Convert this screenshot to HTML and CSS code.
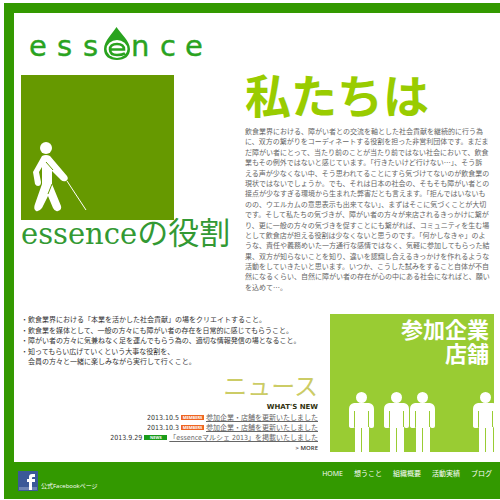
FILE: index.html
```html
<!DOCTYPE html>
<html lang="ja">
<head>
<meta charset="utf-8">
<title>essence</title>
<link rel="stylesheet" href="styles.css">
</head>
<body>
<div class="page">
  <main class="content">
    <header class="brand">
      <svg class="logo" width="180" height="38" viewBox="28 25 180 38" role="img" aria-label="essence">
        <g class="logo-text">
          <text x="29 57 83" y="56">ess</text>
          <text x="131 160 185" y="56">nce</text>
        </g>
        <path d="M116.500 27C113 33 104 41 104 49C104 56 109 60 117 60C125 60 130 56 130 49C130 41 120 33 116.500 27Z" fill="#2aa31f"/>
        <ellipse cx="117" cy="49" rx="10.500" ry="9" fill="#fff"/>
        <path d="M125 53.500Q122 55 117 55Q110 55 110 49.500Q110 44 117 44Q124 44 124 49.500H111" fill="none" stroke="#2aa31f" stroke-width="2.600"/>
      </svg>
    </header>

    <section class="top">
      <div class="role">
        <svg class="walker" width="153" height="145" viewBox="21 75 153 145" aria-hidden="true">
          <path d="M21 75h153v145H21z" fill="#690"/>
          <circle cx="46" cy="148" r="6" fill="#fff"/>
          <path d="M42 156Q46 154 50 156L67 176Q69 179 66 181Q63 182 61 180L52 171V184L61 206Q62 210 58 211Q55 212 53 208L48 196L42 208Q39 212 36 211Q33 209 35 204L42 184V167L39 172L41 182Q41 186 38 186Q36 186 35 184L33 172Z" fill="#fff"/>
          <path d="M42 184L51 180L52 184L48 196Z" fill="#fff"/>
          <path d="M46 162L53 170M52 184L48 194" fill="none" stroke="#690"/>
          <path d="M67 181L86 210" fill="none" stroke="#fff"/>
        </svg>
        <h2 class="role-title"><span class="latin">essence</span>の役割</h2>
      </div>
      <div class="about">
        <h1>私たちは</h1>
        <p class="lines">
          <span>飲食業界における、障がい者との交流を軸とした社会貢献を継続的に行う為</span>
          <span>に、双方の繋がりをコーディネートする役割を担った非営利団体です。まだま</span>
          <span>だ障がい者にとって、当たり前のことが当たり前ではない社会において、飲食</span>
          <span>業もその例外ではないと感じています。「行きたいけど行けない…」、そう訴</span>
          <span>える声が少なくない中、そう思われてることにすら気づけてないのが飲食業の</span>
          <span>現状ではないでしょうか。でも、それは日本の社会の、そもそも障がい者との</span>
          <span>接点が少なすぎる環境から生まれた弊害だとも言えます。「拒んではいないも</span>
          <span>のの、ウエルカムの意思表示も出来てない」、まずはそこに気づくことが大切</span>
          <span>です。そして私たちの気づきが、障がい者の方々が来店されるきっかけに繋が</span>
          <span>り、更に一般の方々の気づきを促すことにも繋がれば、コミュニティを生む場</span>
          <span>として飲食店が担える役割は少なくないと思うのです。「何かしなきゃ」のよ</span>
          <span>うな、責任や義務めいた一方通行な感情ではなく、気軽に参加してもらった結</span>
          <span>果、双方が知らないことを知り、違いを認識し合えるきっかけを作れるような</span>
          <span>活動をしていきたいと思います。いつか、こうした試みをすること自体が不自</span>
          <span>然になるくらい、自然に障がい者の存在が心の中にある社会になればと、願い</span>
          <span>を込めて…。</span>
        </p>
      </div>
    </section>

    <section class="bottom">
      <div class="left">
        <ul class="goals lines">
          <li>・飲食業界における「本業を活かした社会貢献」の場をクリエイトすること。</li>
          <li>・飲食業を媒体として、一般の方々にも障がい者の存在を日常的に感じてもらうこと。</li>
          <li>・障がい者の方々に気兼ねなく足を運んでもらう為の、適切な情報発信の場となること。</li>
          <li>・知ってもらい広げていくという大事な役割を、</li>
          <li class="continued">会員の方々と一緒に楽しみながら実行して行くこと。</li>
        </ul>
        <div class="news">
          <h2>ニュース</h2>
          <h3>WHAT'S NEW</h3>
          <ul class="news-list">
            <li>2013.10.5 <b class="tag">MEMBERS</b> <a href="#">参加企業・店舗を更新いたしました</a></li>
            <li>2013.10.3 <b class="tag">MEMBERS</b> <a href="#">参加企業・店舗を更新いたしました</a></li>
            <li>2013.9.29 <b class="tag green">NEWS</b> <a href="#">「essenceマルシェ 2013」を掲載いたしました</a></li>
          </ul>
          <a class="more" href="#">&gt; MORE</a>
        </div>
      </div>
      <a class="partners" href="#">
        <span>参加企業<br>店舗</span>
        <svg width="164" height="60" viewBox="0 0 164 60" aria-hidden="true">
          <defs>
            <g id="person">
              <circle cx="12.500" cy="5.500" r="5.500" fill="#fff"/>
              <path d="M5 11H20Q25 12 25 17V34Q25 36 23 36Q20 36 20 34V60H6V34Q6 36 3 36Q0 36 0 34V17Q0 12 5 11Z" fill="#fff"/>
              <path d="M5.500 19V35M19.500 19V35M12.500 36V60" stroke="#9c3"/>
            </g>
          </defs>
          <use href="#person" x="19"/>
          <use href="#person" x="54"/>
          <use href="#person" x="80"/>
          <use href="#person" x="143"/>
        </svg>
      </a>
    </section>
  </main>

  <footer class="footer">
    <a class="facebook" href="#">
      <svg width="20" height="20" viewBox="0 0 20 20" aria-hidden="true">
        <path d="M0 0h20v20H0z" fill="#3b5998"/>
        <path d="M1 16h18v3H1z" fill="#6d84b4"/>
        <path d="M11 19V11H9V8H11V6Q11 3 14 3H17V6H15Q14 6 14 7V8H17V11H14V19Z" fill="#fff"/>
      </svg>
      <span>公式Facebookページ</span>
    </a>
    <nav class="nav">
      <a href="#">HOME</a>
      <a href="#">想うこと</a>
      <a href="#">組織概要</a>
      <a href="#">活動実績</a>
      <a href="#">ブログ</a>
    </nav>
  </footer>
</div>
</body>
</html>
```
FILE: styles.css
```css
* { box-sizing: border-box; margin: 0; padding: 0; }

body {
  padding: 3px 0 1px 4px;
  background: #fff;
  color: #333;
  font: 7px/10px "Open Sans", "Noto Sans CJK JP", sans-serif;
}

a { color: inherit; text-decoration: none; }
ul { list-style: none; }
svg { display: block; }

.page { background: #390; padding: 10px 0 0 10px; }
.content { background: #fff; padding: 12px 6px 9px 7px; }

.brand { padding-left: 7px; }
.logo-text {
  font: 29px "DejaVu Sans", sans-serif;
  fill: #2aa31f;
  stroke: #2aa31f;
  stroke-width: 0.4;
}

.top { display: flex; justify-content: space-between; margin-top: 12px; height: 217px; }
.role-title {
  color: #393;
  font: 31px/28px "Liberation Serif", "Noto Sans CJK JP", serif;
  white-space: nowrap;
}
.latin { font: 29px/28px "DejaVu Serif", serif; }

.about { width: 249px; }
h1 { color: #9c0; font: bold 46px/44px "Liberation Sans", "Noto Sans CJK JP", sans-serif; }

.lines {
  display: flex;
  flex-direction: column;
  justify-content: space-between;
  white-space: nowrap;
  font-family: "Noto Sans CJK JP", sans-serif;
}
p.lines { height: 166px; margin-top: 7px; color: #666; }

.bottom { display: flex; justify-content: space-between; margin-top: 22px; }
.left { width: 297px; }
.goals { height: 52px; }
.continued { padding-left: 7px; }

.news { text-align: right; margin-top: 6px; }
h2 { font-weight: 400; }
.news h2 { color: #cc6; font: 24px/30px "Liberation Sans", "Noto Sans CJK JP", sans-serif; }
h3 { font: bold 7px/10px "DejaVu Sans", sans-serif; color: #331; }
.news-list { margin-top: 1px; }
.news-list li { font-family: "DejaVu Sans Condensed", "DejaVu Sans", "Noto Sans CJK JP", sans-serif; }
.news-list a { color: #666; text-decoration: underline; }
.tag {
  display: inline-block;
  width: 23px;
  height: 5px;
  background: #e62;
  color: #fff;
  font: bold 4px/5px "Open Sans", sans-serif;
  text-align: center;
  vertical-align: 1px;
}
.green { background: #1a9c1a; }
.more { display: block; font-weight: 600; font-size: 6px; }

.partners {
  display: flex;
  flex-direction: column;
  justify-content: space-between;
  width: 164px;
  height: 138px;
  background: #9c3;
}
.partners span {
  padding: 5px 5px 0 0;
  color: #fff;
  font: bold 22px/24px "Liberation Sans", "Noto Sans CJK JP", sans-serif;
  text-align: right;
}

.footer {
  display: flex;
  justify-content: space-between;
  height: 37px;
  padding: 7px 8px 0 4px;
  color: #fff;
}
.facebook { display: flex; align-items: flex-end; gap: 3px; height: 22px; font-size: 6px; }
.nav { display: flex; gap: 11px; }
```
